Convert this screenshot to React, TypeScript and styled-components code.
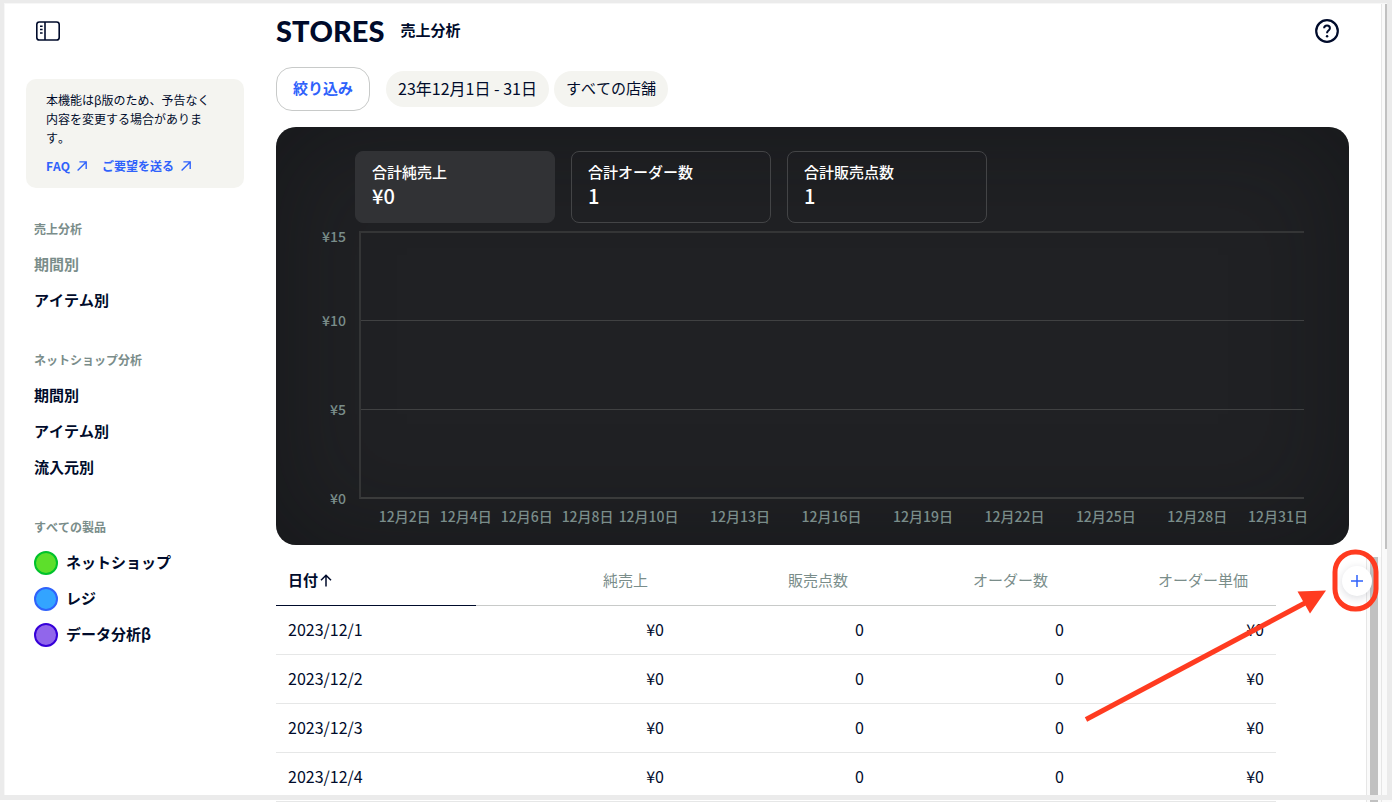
import React from "react";
import styled, { createGlobalStyle } from "styled-components";

const ink = "#000b2b";
const muted = "#7a8d8a";
const blue = "#2f62fb";
const soft = "#f4f4f0";
const red = "#ff3b20";

const GlobalStyle = createGlobalStyle`
  *, *::before, *::after { box-sizing: border-box; }
  body {
    margin: 0;
    background: #fff;
    color: ${ink};
    font-family: "Noto Sans CJK JP", "Noto Sans", sans-serif;
    font-size: 15px;
    font-kerning: none;
    line-height: 24px;
  }
  button { font: inherit; font-kerning: inherit; color: inherit; cursor: pointer; }
  a { color: inherit; text-decoration: none; }
  svg { display: block; }
`;

const Shell = styled.div`
  position: relative;
  display: flex;
  height: 100vh;
  overflow: hidden;
`;

const WindowFrame = styled.div`
  position: absolute;
  inset: 0 0 2px;
  border: solid #ebebeb;
  border-width: 3px 5px 5px 4px;
  box-shadow: inset 1px 1px 0 #f7f7f7;
  pointer-events: none;
`;

const Sidebar = styled.aside`
  flex: 0 0 276px;
  padding: 19px 32px 0 26px;
`;

const IconButton = styled.button`
  display: block;
  padding: 0;
  border: 0;
  background: none;
`;

const Toggle = styled(IconButton)`
  margin-left: 10px;
`;

const Note = styled.section`
  margin-top: 36px;
  padding: 11px 32px 13px 20px;
  border-radius: 10px;
  background: ${soft};
  font-size: 12px;
  line-height: 19px;
`;

const NoteText = styled.p`
  margin: 0 0 9px;
`;

const NoteLinks = styled.div`
  display: flex;
  gap: 15px;
  color: ${blue};
  font-weight: 700;
  white-space: nowrap;
`;

const NoteLink = styled.a`
  display: flex;
  align-items: center;
  gap: 7px;
`;

const Nav = styled.nav`
  display: flex;
  flex-direction: column;
  gap: 32px;
  margin: 32px 0 0 8px;
`;

const GroupTitle = styled.h2`
  margin: 0 0 10px;
  color: ${muted};
  font-size: 12px;
  font-weight: 700;
  line-height: 17px;
`;

const NavLink = styled.a<{ $current?: boolean }>`
  display: flex;
  gap: 8px;
  height: 36px;
  font-weight: 700;
  line-height: 34px;
  color: ${(p) => (p.$current ? muted : ink)};
`;

const Dot = styled.span<{ $fill: string; $edge: string }>`
  width: 24px;
  height: 24px;
  margin-top: 6px;
  border: 2px solid ${(p) => p.$edge};
  border-radius: 50%;
  background: ${(p) => p.$fill};
`;

const Main = styled.main`
  flex: 1;
  min-width: 0;
`;

const Header = styled.header`
  display: flex;
  align-items: center;
  height: 62px;
  padding-right: 42px;
`;

const Logo = styled.a`
  font-family: Lato, sans-serif;
  font-size: 29px;
  font-weight: 900;
  line-height: 32px;
`;

const PageTitle = styled.h1`
  flex: 1;
  margin: 0 0 2px 16px;
  font-size: 15px;
  font-weight: 700;
`;

const Filters = styled.div`
  display: flex;
  align-items: center;
  gap: 5px;
  margin-top: 5px;
`;

const FilterButton = styled.button`
  height: 44px;
  margin-right: 11px;
  padding: 0 16px 2px;
  border: 1px solid #c8cac9;
  border-radius: 16px;
  background: #fff;
  color: ${blue};
  font-weight: 700;
`;

const Chip = styled.span<{ $numeric?: boolean }>`
  padding: 0 12px 2px;
  border-radius: 18px;
  background: ${soft};
  font-size: ${(p) => (p.$numeric ? 16 : 15)}px;
  line-height: 34px;
`;

const ChartCard = styled.section`
  margin: 16px 32px 0 0;
  padding: 24px 45px 20px 0;
  border-radius: 20px;
  background: #202124;
  box-shadow: inset 0 0 110px rgba(12, 14, 16, 0.45);
`;

const Stats = styled.div`
  display: flex;
  gap: 16px;
  padding-left: 79px;
`;

const Stat = styled.button<{ $selected?: boolean }>`
  width: 200px;
  height: 72px;
  padding: 0 16px 6px;
  border: 1px solid ${(p) => (p.$selected ? "#313235" : "#434446")};
  border-radius: 8px;
  background: ${(p) => (p.$selected ? "#313235" : "transparent")};
  color: #fff;
  font-weight: 500;
  text-align: left;
`;

const StatValue = styled.strong`
  display: block;
  font-size: 20px;
  font-weight: 500;
`;

const Chart = styled.div`
  display: grid;
  grid-template-columns: 70px minmax(0, 1fr);
  column-gap: 13px;
  margin-top: 5px;
  color: ${muted};
  font-size: 14px;
  font-weight: 500;
  line-height: 18px;
`;

const YAxis = styled.div`
  display: grid;
  grid-template-rows: 17px 84px 89px 89px;
  align-items: end;
  text-align: right;
`;

const Plot = styled.div`
  margin-top: 3px;
  height: 268px;
  border-left: 2px solid #343536;
  border-bottom: 2px solid #3a3b3b;
`;

const Band = styled.div`
  height: 89px;
  border-top: 1px solid #404142;
  &:first-child {
    border-top: 2px solid #343536;
  }
`;

const XAxis = styled.div`
  grid-column: 2;
  display: grid;
  grid-template-columns: repeat(31, minmax(0, 1fr));
`;

const XLabel = styled.span<{ $day: number }>`
  display: flex;
  grid-row: 1;
  grid-column: ${(p) => p.$day};
  justify-content: ${(p) => (p.$day === 31 ? "flex-end" : "center")};
  margin-right: ${(p) => (p.$day === 31 ? -4 : 0)}px;
  white-space: nowrap;
`;

const TableArea = styled.section`
  position: relative;
  display: flex;
  justify-content: space-between;
  margin-top: 12px;
`;

const Table = styled.table`
  flex: 0 0 1000px;
  width: 1000px;
  table-layout: fixed;
  border-collapse: separate;
  border-spacing: 0;
`;

const Th = styled.th<{ $sorted?: boolean }>`
  height: 49px;
  padding: ${(p) => (p.$sorted ? "0 12px 2px" : "0 28px 2px 12px")};
  border-bottom: 1px solid ${(p) => (p.$sorted ? ink : "#c8cac9")};
  color: ${(p) => (p.$sorted ? ink : muted)};
  font-weight: ${(p) => (p.$sorted ? 700 : 400)};
  text-align: ${(p) => (p.$sorted ? "left" : "right")};
`;

const SortButton = styled.button`
  display: flex;
  align-items: center;
  gap: 2px;
  padding: 0;
  border: 0;
  background: none;
`;

const Td = styled.td`
  height: 49px;
  padding: 0 12px 2px;
  border-bottom: 1px solid #e6e7e7;
  font-size: 16px;
  text-align: right;
  &:first-child {
    text-align: left;
  }
`;

const InnerTrack = styled.div`
  flex: 0 0 15px;
  padding: 0 3px;
  border-left: 1px solid #e6e6e6;
  background: #fafafa;
`;

const InnerThumb = styled.div`
  width: 8px;
  height: 100%;
  background: #c1c1c1;
`;

const OuterTrack = styled.div`
  flex: 0 0 11px;
  padding-left: 3px;
  border-left: 1px solid #e6e6e6;
  background: #fafafa;
`;

const OuterThumb = styled.div`
  height: 549px;
  background: #c1c1c1;
`;

const AddButton = styled.button`
  position: absolute;
  top: 9px;
  right: 9px;
  display: grid;
  place-items: center;
  width: 30px;
  height: 30px;
  padding: 0;
  border: 0;
  border-radius: 50%;
  background: #fff;
  box-shadow: 0 2px 8px rgba(0, 11, 43, 0.14);
`;

const Callout = styled.svg`
  position: absolute;
  top: -12px;
  right: 0;
  pointer-events: none;
`;

const SidebarIcon = () => (
  <svg width="24" height="24" viewBox="0 0 24 24" fill="none" stroke={ink}>
    <rect x="0.8" y="3" width="22.4" height="18" rx="2.6" strokeWidth="1.6" />
    <path d="M9 3v18" strokeWidth="1.6" />
    <path d="M4 7.2h2.6M4 10.6h2.6M4 14h2.6" strokeWidth="1.5" />
  </svg>
);

const HelpIcon = () => (
  <svg width="24" height="24" viewBox="0 0 24 24" fill="none" stroke={ink} strokeWidth="2">
    <circle cx="12" cy="12" r="10.8" strokeWidth="2.2" />
    <path d="M9.1 9.2C9.2 7.4 10.4 6.6 12 6.6s2.9 1 2.9 2.6c0 2.2-2.8 2.3-2.8 4.6v.4" />
    <circle cx="12.1" cy="17.2" r="1.2" fill={ink} stroke="none" />
  </svg>
);

const ExternalIcon = () => (
  <svg width="10" height="10" viewBox="0 0 10 10" fill="none" stroke={blue} strokeWidth="1.4">
    <path d="M0.6 9.4L9.2 0.9M2.4 0.9H9.2v7" />
  </svg>
);

const ArrowUpIcon = () => (
  <svg width="12" height="13" viewBox="0 0 12 13" fill="none" stroke={ink} strokeWidth="1.5">
    <path d="M6 12.6V1.4M1 6.2l5-5 5 5" />
  </svg>
);

const PlusIcon = () => (
  <svg width="12" height="12" viewBox="0 0 12 12" stroke={blue} strokeWidth="1.5">
    <path d="M6 0v12M0 6h12" />
  </svg>
);

const groups = [
  { title: "売上分析", items: [{ label: "期間別", current: true }, { label: "アイテム別" }] },
  {
    title: "ネットショップ分析",
    items: [{ label: "期間別" }, { label: "アイテム別" }, { label: "流入元別" }],
  },
];

const products = [
  { label: "ネットショップ", fill: "#5ddf2b", edge: "#00c22b" },
  { label: "レジ", fill: "#33a4ff", edge: "#2f62fb" },
  { label: "データ分析β", fill: "#9166eb", edge: "#3600d9" },
];

const stats = [
  { label: "合計純売上", value: "¥0" },
  { label: "合計オーダー数", value: "1" },
  { label: "合計販売点数", value: "1" },
];

const days = [2, 4, 6, 8, 10, 13, 16, 19, 22, 25, 28, 31];
const columns = ["純売上", "販売点数", "オーダー数", "オーダー単価"];
const rows = [1, 2, 3, 4].map((d) => [`2023/12/${d}`, "¥0", "0", "0", "¥0"]);

export default function App() {
  return (
    <Shell>
      <GlobalStyle />
      <Sidebar>
        <Toggle aria-label="サイドバーを切り替える">
          <SidebarIcon />
        </Toggle>
        <Note>
          <NoteText>本機能はβ版のため、予告なく内容を変更する場合があります。</NoteText>
          <NoteLinks>
            <NoteLink href="#faq">
              FAQ <ExternalIcon />
            </NoteLink>
            <NoteLink href="#request">
              ご要望を送る <ExternalIcon />
            </NoteLink>
          </NoteLinks>
        </Note>
        <Nav>
          {groups.map((g) => (
            <section key={g.title}>
              <GroupTitle>{g.title}</GroupTitle>
              {g.items.map((it) => (
                <NavLink key={it.label} href="#report" $current={"current" in it}>
                  {it.label}
                </NavLink>
              ))}
            </section>
          ))}
          <section>
            <GroupTitle>すべての製品</GroupTitle>
            {products.map((p) => (
              <NavLink key={p.label} href="#product">
                <Dot $fill={p.fill} $edge={p.edge} />
                {p.label}
              </NavLink>
            ))}
          </section>
        </Nav>
      </Sidebar>

      <Main>
        <Header>
          <Logo href="#home">STORES</Logo>
          <PageTitle>売上分析</PageTitle>
          <IconButton aria-label="ヘルプ">
            <HelpIcon />
          </IconButton>
        </Header>
        <Filters>
          <FilterButton>絞り込み</FilterButton>
          <Chip $numeric>23年12月1日 - 31日</Chip>
          <Chip>すべての店舗</Chip>
        </Filters>

        <ChartCard>
          <Stats>
            {stats.map((s, i) => (
              <Stat key={s.label} $selected={i === 0}>
                {s.label}
                <StatValue>{s.value}</StatValue>
              </Stat>
            ))}
          </Stats>
          <Chart>
            <YAxis>
              {["¥15", "¥10", "¥5", "¥0"].map((t) => (
                <span key={t}>{t}</span>
              ))}
            </YAxis>
            <Plot>
              <Band />
              <Band />
              <Band />
            </Plot>
            <XAxis>
              {days.map((d) => (
                <XLabel key={d} $day={d}>
                  12月{d}日
                </XLabel>
              ))}
            </XAxis>
          </Chart>
        </ChartCard>

        <TableArea>
          <Table>
            <thead>
              <tr>
                <Th $sorted scope="col" aria-sort="ascending">
                  <SortButton>
                    日付 <ArrowUpIcon />
                  </SortButton>
                </Th>
                {columns.map((c) => (
                  <Th key={c} scope="col">
                    {c}
                  </Th>
                ))}
              </tr>
            </thead>
            <tbody>
              {rows.map((r) => (
                <tr key={r[0]}>
                  {r.map((c, i) => (
                    <Td key={i}>{c}</Td>
                  ))}
                </tr>
              ))}
            </tbody>
          </Table>
          <InnerTrack>
            <InnerThumb />
          </InnerTrack>
          <AddButton aria-label="列を追加">
            <PlusIcon />
          </AddButton>
          <Callout width="301" height="190" viewBox="0 0 301 190" fill="none" stroke={red}>
            <rect x="255" y="7" width="41" height="57" rx="20" strokeWidth="5" />
            <path d="M6 174.5L225 58" strokeWidth="5" />
            <path d="M217.5 46.5L246 45.5L230 68.5Z" fill={red} stroke="none" />
          </Callout>
        </TableArea>
      </Main>
      <OuterTrack>
        <OuterThumb />
      </OuterTrack>
      <WindowFrame />
    </Shell>
  );
}
